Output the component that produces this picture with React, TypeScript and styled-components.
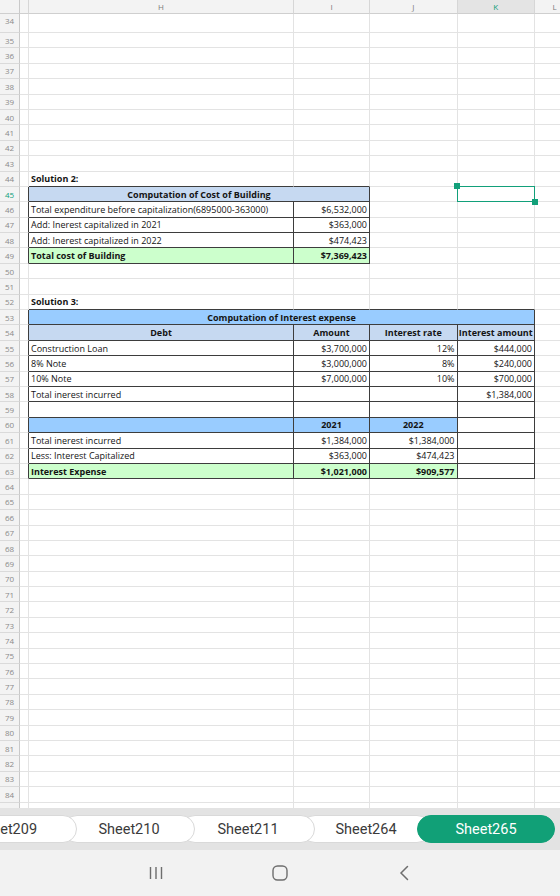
import React from "react";
import styled, { createGlobalStyle } from "styled-components";

const GlobalStyle = createGlobalStyle`
  html, body {
    margin: 0;
    padding: 0;
    background: #ffffff;
  }
  body {
    width: 560px;
    height: 896px;
    overflow: hidden;
    font-family: "Open Sans", "Noto Sans", sans-serif;
  }
`;

const BLUE_LIGHT = "#c6d9f1";
const BLUE_MID = "#99ccff";
const GREEN = "#ccffcc";
const ACCENT = "#12a07a";

type Align = "left" | "right" | "center";

interface CellSpec {
  text?: string;
  bold?: boolean;
  align?: Align;
  bg?: string;
  span?: number;
}

// columns G..L -> index 0..5
const COLS = ["", "H", "I", "J", "K", "L"];
const FIRST_ROW = 34;
const LAST_ROW = 85;

const sheet: Record<number, Record<number, CellSpec>> = {
  44: { 1: { text: "Solution 2:", bold: true } },
  45: { 1: { text: "Computation of Cost of Building", bold: true, align: "center", bg: BLUE_LIGHT, span: 2 } },
  46: {
    1: { text: "Total expenditure before capitalization(6895000-363000)" },
    2: { text: "$6,532,000", align: "right" },
  },
  47: { 1: { text: "Add: Inerest capitalized in 2021" }, 2: { text: "$363,000", align: "right" } },
  48: { 1: { text: "Add: Inerest capitalized in 2022" }, 2: { text: "$474,423", align: "right" } },
  49: {
    1: { text: "Total cost of Building", bold: true, bg: GREEN },
    2: { text: "$7,369,423", bold: true, align: "right", bg: GREEN },
  },
  52: { 1: { text: "Solution 3:", bold: true } },
  53: { 1: { text: "Computation of Interest expense", bold: true, align: "center", bg: BLUE_MID, span: 4 } },
  54: {
    1: { text: "Debt", bold: true, align: "center", bg: BLUE_LIGHT },
    2: { text: "Amount", bold: true, align: "center", bg: BLUE_LIGHT },
    3: { text: "Interest rate", bold: true, align: "center", bg: BLUE_LIGHT },
    4: { text: "Interest amount", bold: true, align: "center", bg: BLUE_LIGHT },
  },
  55: {
    1: { text: "Construction Loan" },
    2: { text: "$3,700,000", align: "right" },
    3: { text: "12%", align: "right" },
    4: { text: "$444,000", align: "right" },
  },
  56: {
    1: { text: "8% Note" },
    2: { text: "$3,000,000", align: "right" },
    3: { text: "8%", align: "right" },
    4: { text: "$240,000", align: "right" },
  },
  57: {
    1: { text: "10% Note" },
    2: { text: "$7,000,000", align: "right" },
    3: { text: "10%", align: "right" },
    4: { text: "$700,000", align: "right" },
  },
  58: { 1: { text: "Total inerest incurred" }, 4: { text: "$1,384,000", align: "right" } },
  60: {
    1: { bg: BLUE_MID },
    2: { text: "2021", bold: true, align: "center", bg: BLUE_MID },
    3: { text: "2022", bold: true, align: "center", bg: BLUE_MID },
  },
  61: {
    1: { text: "Total inerest incurred" },
    2: { text: "$1,384,000", align: "right" },
    3: { text: "$1,384,000", align: "right" },
  },
  62: {
    1: { text: "Less: Interest Capitalized" },
    2: { text: "$363,000", align: "right" },
    3: { text: "$474,423", align: "right" },
  },
  63: {
    1: { text: "Interest Expense", bold: true, bg: GREEN },
    2: { text: "$1,021,000", bold: true, align: "right", bg: GREEN },
    3: { text: "$909,577", bold: true, align: "right", bg: GREEN },
  },
};

// ranges drawn with all borders
const tables = [
  { r0: 45, r1: 49, c0: 1, c1: 2 },
  { r0: 53, r1: 63, c0: 1, c1: 4 },
];

const boxed = (r: number, c: number) =>
  tables.some((t) => r >= t.r0 && r <= t.r1 && c >= t.c0 && c <= t.c1);

const ACTIVE_ROW = 45;
const ACTIVE_COL = 4;

const Screen = styled.div`
  width: 560px;
  height: 896px;
  display: flex;
  flex-direction: column;
  overflow: hidden;
`;

const Sheet = styled.div`
  height: 808px;
  flex: 0 0 808px;
  overflow: hidden;
  display: grid;
  grid-template-columns: 20px 9px 265px 76px 87.5px 77.5px 40px;
  grid-template-rows: 14px 19px;
  grid-auto-rows: 15.4px;
`;

const Corner = styled.div`
  box-sizing: border-box;
  background: #f3f3f3;
  border-right: 1px solid #c9c9c9;
  border-bottom: 1px solid #cfcfcf;
`;

const ColHead = styled.div<{ $active?: boolean }>`
  box-sizing: border-box;
  background: ${(p) => (p.$active ? "#e4e4e4" : "#f3f3f3")};
  border-right: 1px solid #d6d6d6;
  border-bottom: 1px solid #cfcfcf;
  display: flex;
  align-items: center;
  justify-content: center;
  font-size: 8px;
  color: ${(p) => (p.$active ? ACCENT : "#7c7c7c")};
  white-space: nowrap;
  overflow: hidden;
`;

const RowHead = styled.div<{ $active?: boolean; $top?: boolean }>`
  box-sizing: border-box;
  background: #f3f3f3;
  border-right: 1px solid #c9c9c9;
  border-bottom: 1px solid #dadada;
  display: flex;
  align-items: ${(p) => (p.$top ? "flex-start" : "center")};
  justify-content: center;
  padding-top: ${(p) => (p.$top ? "1px" : "0")};
  font-size: 8px;
  color: ${(p) => (p.$active ? ACCENT : "#8a8a8a")};
`;

const Cell = styled.div<{
  $bg?: string;
  $bold?: boolean;
  $align?: Align;
  $span: number;
  $rb: boolean;
  $bb: boolean;
}>`
  box-sizing: border-box;
  position: relative;
  grid-column: span ${(p) => p.$span};
  background: ${(p) => p.$bg || "#ffffff"};
  border-right: 1px solid ${(p) => (p.$rb ? "#3d3d3d" : "#e3e3e3")};
  border-bottom: 1px solid ${(p) => (p.$bb ? "#3d3d3d" : "#e3e3e3")};
  display: flex;
  align-items: center;
  justify-content: ${(p) =>
    p.$align === "right" ? "flex-end" : p.$align === "center" ? "center" : "flex-start"};
  padding: 0 2px;
  font-size: 9px;
  font-weight: ${(p) => (p.$bold ? 700 : 400)};
  color: #141414;
  white-space: nowrap;
`;

const Selection = styled.div`
  position: absolute;
  left: -1px;
  top: -1px;
  right: -1px;
  bottom: -1px;
  border: 1.5px solid ${ACCENT};
  pointer-events: none;
  z-index: 2;
`;

const Handle = styled.span<{ $corner: "tl" | "br" }>`
  position: absolute;
  width: 6px;
  height: 6px;
  background: ${ACCENT};
  ${(p) => (p.$corner === "tl" ? "left: -4px; top: -4px;" : "right: -4px; bottom: -4px;")}
`;

const TabStrip = styled.div`
  flex: 0 0 42px;
  background: #e3e3e3;
  display: flex;
  align-items: center;
  overflow: hidden;
`;

const Tab = styled.div<{ $w: number; $active?: boolean; $z: number }>`
  box-sizing: border-box;
  flex: 0 0 ${(p) => p.$w}px;
  height: 28px;
  margin-left: -14px;
  border-radius: 14px;
  background: ${(p) => (p.$active ? "#11a077" : "#ffffff")};
  border: 1px solid ${(p) => (p.$active ? "#11a077" : "#d9d9d9")};
  display: flex;
  align-items: center;
  justify-content: center;
  font-family: Roboto, "Noto Sans", sans-serif;
  font-size: 14.5px;
  color: ${(p) => (p.$active ? "#ffffff" : "#3a3a3a")};
  position: relative;
  z-index: ${(p) => p.$z};
  &:first-child {
    margin-left: -64px;
  }
`;

const NavBar = styled.div`
  flex: 1;
  background: #f2f2f2;
  display: grid;
  grid-template-columns: repeat(3, 124px);
  justify-content: center;
  align-items: center;
`;

const NavButton = styled.div`
  display: flex;
  justify-content: center;
  align-items: center;
  color: #6e6e6e;
`;

const tabs = [
  { name: "Sheet209", w: 141 },
  { name: "Sheet210", w: 132 },
  { name: "Sheet211", w: 134 },
  { name: "Sheet264", w: 130 },
  { name: "Sheet265", w: 138, active: true },
];

function renderRow(r: number) {
  const spec = sheet[r] || {};
  const out: React.ReactNode[] = [
    <RowHead key={`h${r}`} $active={r === ACTIVE_ROW} $top={r === FIRST_ROW}>
      {r}
    </RowHead>,
  ];
  let c = 0;
  while (c < COLS.length) {
    const cell = spec[c] || {};
    const span = cell.span || 1;
    const last = c + span - 1;
    const rb = boxed(r, last) || boxed(r, last + 1);
    let bb = false;
    for (let k = c; k <= last; k++) if (boxed(r, k) || boxed(r + 1, k)) bb = true;
    out.push(
      <Cell
        key={`${r}-${c}`}
        $bg={cell.bg}
        $bold={cell.bold}
        $align={cell.align}
        $span={span}
        $rb={rb}
        $bb={bb}
      >
        {cell.text}
        {r === ACTIVE_ROW && c === ACTIVE_COL && (
          <Selection>
            <Handle $corner="tl" />
            <Handle $corner="br" />
          </Selection>
        )}
      </Cell>
    );
    c += span;
  }
  return out;
}

export default function App() {
  const rows: number[] = [];
  for (let r = FIRST_ROW; r <= LAST_ROW; r++) rows.push(r);

  return (
    <>
      <GlobalStyle />
      <Screen>
        <Sheet>
          <Corner />
          {COLS.map((label, i) => (
            <ColHead key={i} $active={i === ACTIVE_COL}>
              {label}
            </ColHead>
          ))}
          {rows.map((r) => renderRow(r))}
        </Sheet>

        <TabStrip>
          {tabs.map((t, i) => (
            <Tab key={t.name} $w={t.w} $active={t.active} $z={t.active ? 20 : 10 - i}>
              {t.name}
            </Tab>
          ))}
        </TabStrip>

        <NavBar>
          <NavButton>
            <svg width="14" height="14" viewBox="0 0 14 14">
              <path d="M1.5 1v12M7 1v12M12.5 1v12" stroke="currentColor" strokeWidth="1.4" fill="none" />
            </svg>
          </NavButton>
          <NavButton>
            <svg width="16" height="16" viewBox="0 0 16 16">
              <rect x="1" y="1" width="14" height="14" rx="4.5" stroke="currentColor" strokeWidth="1.4" fill="none" />
            </svg>
          </NavButton>
          <NavButton>
            <svg width="12" height="16" viewBox="0 0 12 16">
              <path d="M9.5 1.5 3 8l6.5 6.5" stroke="currentColor" strokeWidth="1.5" fill="none" strokeLinecap="round" />
            </svg>
          </NavButton>
        </NavBar>
      </Screen>
    </>
  );
}
